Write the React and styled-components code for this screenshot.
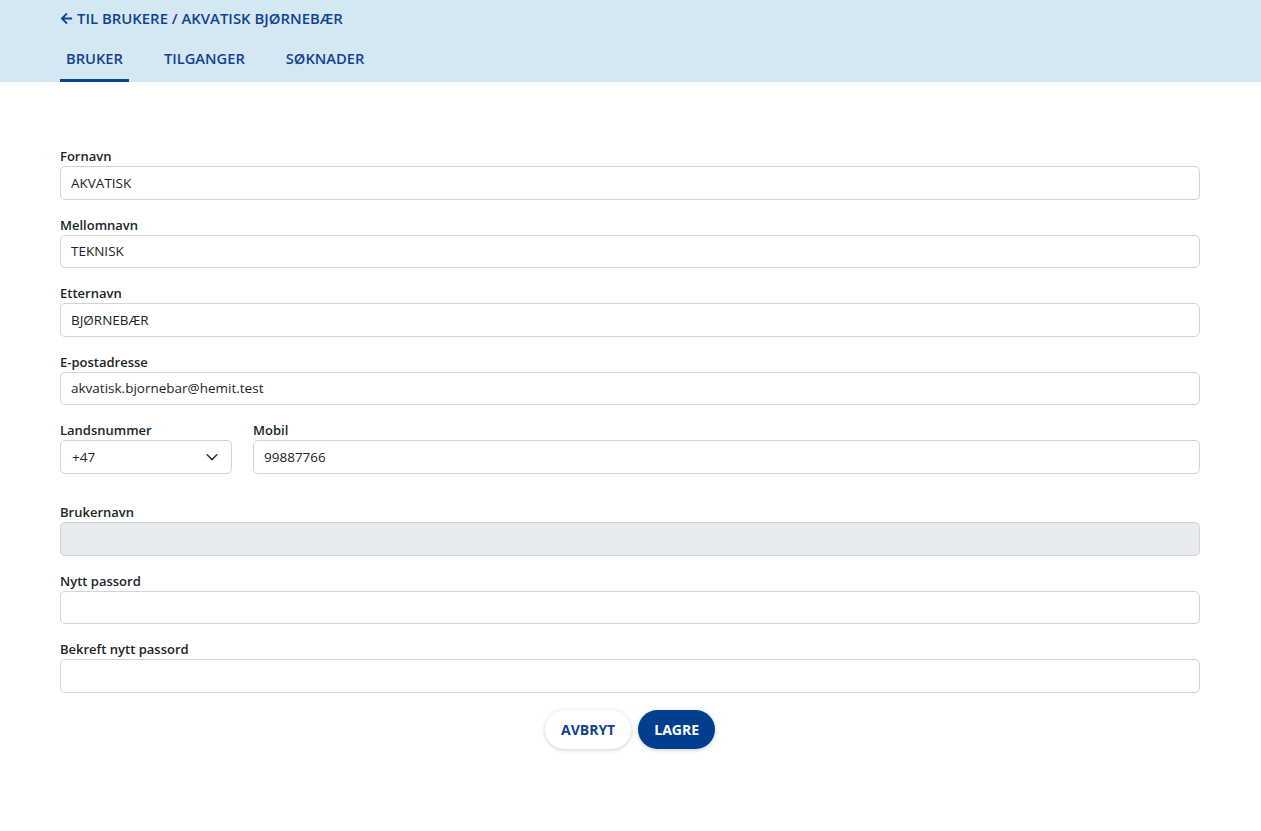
import React from 'react';
import styled, { createGlobalStyle } from 'styled-components';
import { FaArrowLeft } from 'react-icons/fa';

const GlobalStyle = createGlobalStyle`
	body {
		margin: 0;
		font-family: 'Open Sans', 'Noto Sans', sans-serif;
		background: #fff;
		color: #212529;
	}
`;

const fields = [
	{ label: 'Fornavn', value: 'AKVATISK' },
	{ label: 'Mellomnavn', value: 'TEKNISK' },
	{ label: 'Etternavn', value: 'BJØRNEBÆR' },
	{ label: 'E-postadresse', value: 'akvatisk.bjornebar@hemit.test' },
];

const App = () => {
	return (
		<>
			<GlobalStyle />
			<HeaderWrapper>
				<BackLink>
					<FaArrowLeft />
					TIL BRUKERE / AKVATISK BJØRNEBÆR
				</BackLink>
				<Tabs>
					<Tab active>BRUKER</Tab>
					<Tab>TILGANGER</Tab>
					<Tab>SØKNADER</Tab>
				</Tabs>
			</HeaderWrapper>
			<Form>
				{fields.map((f) => (
					<Field key={f.label}>
						<Label>{f.label}</Label>
						<Input defaultValue={f.value} />
					</Field>
				))}
				<Row>
					<Field width="172px">
						<Label>Landsnummer</Label>
						<Select>
							<span>+47</span>
							<svg width="14" height="14" viewBox="0 0 16 16">
								<path
									d="M2.5 5.5 8 11l5.5-5.5"
									fill="none"
									stroke="#343a40"
									strokeWidth="1.8"
									strokeLinecap="round"
									strokeLinejoin="round"
								/>
							</svg>
						</Select>
					</Field>
					<Field grow>
						<Label>Mobil</Label>
						<Input defaultValue="99887766" />
					</Field>
				</Row>
				<Field spaced>
					<Label>Brukernavn</Label>
					<Input disabled />
				</Field>
				<Field>
					<Label>Nytt passord</Label>
					<Input type="password" />
				</Field>
				<Field>
					<Label>Bekreft nytt passord</Label>
					<Input type="password" />
				</Field>
				<Buttons>
					<PillButton>AVBRYT</PillButton>
					<PillButton primary>LAGRE</PillButton>
				</Buttons>
			</Form>
		</>
	);
};

const HeaderWrapper = styled.div`
	background-color: #d6e7f4;
	height: 82px;
	padding: 0 60px;
	box-sizing: border-box;
	display: flex;
	flex-direction: column;
`;

const BackLink = styled.div`
	display: flex;
	align-items: center;
	gap: 4px;
	padding-top: 8px;
	height: 20px;
	font-size: 14.9px;
	font-weight: 600;
	color: #0f4391;
	cursor: pointer;

	svg {
		font-size: 13px;
	}
`;

const Tabs = styled.div`
	display: flex;
	gap: 29px;
	margin-top: 17px;
`;

const Tab = styled.div`
	padding: 0 6px;
	height: 37px;
	line-height: 26px;
	box-sizing: border-box;
	font-size: 14.7px;
	font-weight: 600;
	color: #0f4391;
	border-bottom: 3px solid ${(p) => (p.active ? '#0f4391' : 'transparent')};
	cursor: pointer;
`;

const Form = styled.div`
	padding: 65px 61px 40px 60px;
	display: flex;
	flex-direction: column;
`;

const Row = styled.div`
	display: flex;
	gap: 21px;
`;

const Field = styled.div`
	display: flex;
	flex-direction: column;
	margin-bottom: 16px;
	width: ${(p) => p.width || 'auto'};
	flex: ${(p) => (p.grow ? 1 : 'none')};
	margin-top: ${(p) => (p.spaced ? '13.5px' : '0')};
`;

const Label = styled.label`
	font-size: 13px;
	font-weight: 600;
	line-height: 19px;
	color: #212529;
`;

const Input = styled.input`
	height: 33.5px;
	box-sizing: border-box;
	border: 1px solid #ced4da;
	border-radius: 5px;
	padding: 0 10px;
	font-family: inherit;
	font-size: 13.5px;
	color: #212529;
	background: #fff;

	&:disabled {
		background: #e8ebee;
	}
`;

const Select = styled.div`
	height: 33.5px;
	box-sizing: border-box;
	border: 1px solid #ced4da;
	border-radius: 5px;
	padding: 0 12px 0 11px;
	display: flex;
	align-items: center;
	justify-content: space-between;
	font-size: 13.5px;
	color: #212529;
`;

const Buttons = styled.div`
	display: flex;
	justify-content: center;
	gap: 7px;
	margin-top: 1.5px;
`;

const PillButton = styled.button`
	height: 39px;
	padding: 0 16px;
	border-radius: 20px;
	border: none;
	font-family: inherit;
	font-size: 14px;
	font-weight: 700;
	cursor: pointer;
	background: ${(p) => (p.primary ? '#003f8f' : '#fff')};
	color: ${(p) => (p.primary ? '#fff' : '#0f4391')};
	box-shadow: 0 1px 4px rgba(0, 0, 0, 0.2);
`;

export default App;
